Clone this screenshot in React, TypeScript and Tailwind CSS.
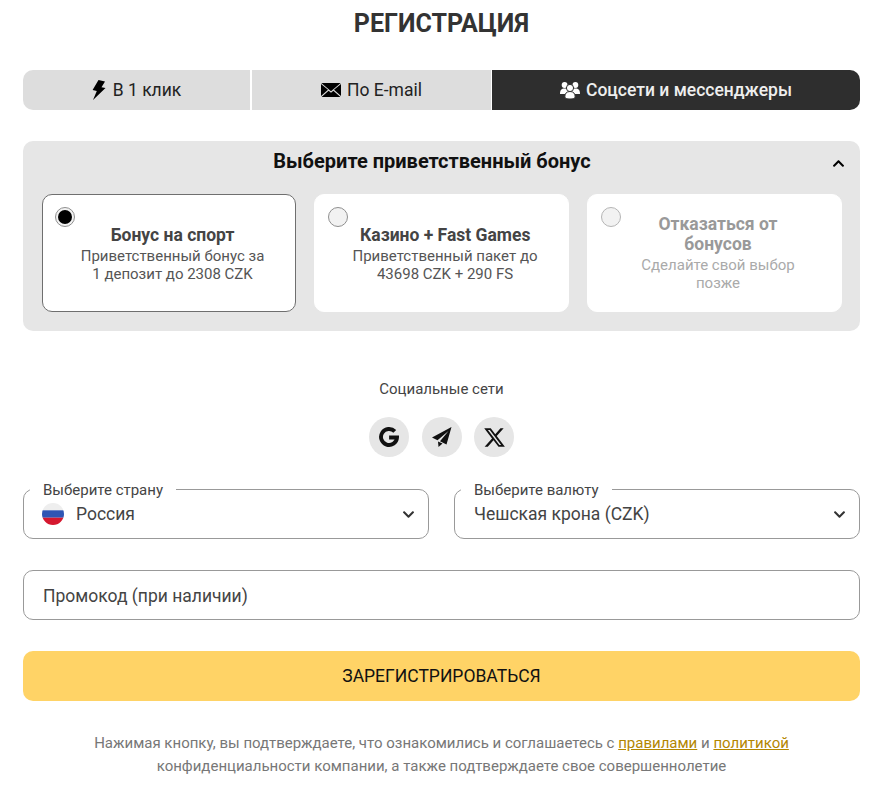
import React from "react";
import { FaChevronDown, FaChevronUp } from "react-icons/fa";
import { FaXTwitter } from "react-icons/fa6";

function Bolt() {
  return (
    <svg width="14" height="20" viewBox="0 0 14 20" fill="#000000">
      <path d="M6.5 0 L13 1.5 L9.5 7.2 L13.5 8 L1 20 L4.8 11 L0.6 10 Z" />
    </svg>
  );
}

function Envelope() {
  return (
    <svg width="20" height="14" viewBox="0 0 20 14" fill="#000000">
      <path d="M0.3 0 H19.7 L10 8.2 Z" />
      <path d="M0 1 V13 L7 6.8 Z" />
      <path d="M20 1 V13 L13 6.8 Z" />
      <path d="M0.6 14 H19.4 L12.4 7.8 L10 9.8 L7.6 7.8 Z" />
    </svg>
  );
}

function Users() {
  return (
    <svg width="20" height="17" viewBox="0 0 20 17" fill="#ffffff">
      <circle cx="4.6" cy="3" r="2.9" />
      <circle cx="15.4" cy="3" r="2.9" />
      <path d="M0 12 C0 8 1.5 6.5 4.5 6.5 C7.5 6.5 9 8 9 12 Z" />
      <path d="M11 12 C11 8 12.5 6.5 15.5 6.5 C18.5 6.5 20 8 20 12 Z" />
      <circle cx="10" cy="6" r="3.6" stroke="#2e2e2e" strokeWidth="1" />
      <path d="M4.8 15 C4.8 11.5 6.5 9.5 10 9.5 C13.5 9.5 15.2 11.5 15.2 15 C15.2 16.4 13 17 10 17 C7 17 4.8 16.4 4.8 15 Z" stroke="#2e2e2e" strokeWidth="1" />
    </svg>
  );
}

function GoogleG() {
  return (
    <svg width="20" height="20" viewBox="0 0 19 19" fill="none" stroke="#111111" strokeWidth="3.7">
      <path d="M15 4.2 A7.6 7.6 0 1 0 17.1 10 H9.6" />
    </svg>
  );
}

function Plane() {
  return (
    <svg width="20" height="22" viewBox="0 0 20 22" fill="#111111">
      <path d="M19.5 1 L0 11.5 L5.5 14.2 L16.5 5 L8 15.3 L14.5 18.5 Z" />
      <path d="M6 15.5 L6.5 21 L10.5 17.5 Z" />
    </svg>
  );
}

function Bonus({ title, lines, active, muted }: { title: string; lines: string[]; active?: boolean; muted?: boolean }) {
  return (
    <div className={"relative h-[118px] rounded-[10px] bg-white pl-[38px] pr-[31px] flex flex-col items-center pt-[19px] text-center border " + (active ? "border-[#6f6f6f]" : "border-white")}>
      <div className={"absolute top-[12px] w-[20px] h-[20px] rounded-full border bg-[#f2f2f2] flex items-center justify-center " + (active ? "left-[12px] border-[#8f8f8f]" : muted ? "left-[13px] border-[#b5b5b5]" : "left-[13px] border-[#8f8f8f]")}>
        {active && <div className="w-[14px] h-[14px] rounded-full bg-black" />}
      </div>
      <div className={"text-[17.5px] leading-[20px] font-bold max-w-[170px] " + (muted ? "text-[#999999]" : "text-[#444444] mt-[11px] whitespace-nowrap")}>{title}</div>
      <div className={"text-[15px] leading-[18px] whitespace-nowrap " + (muted ? "text-[#aaaaaa] mt-[2px]" : "text-[#555555] mt-[2px]")}>
        {lines.map((l) => <div key={l}>{l}</div>)}
      </div>
    </div>
  );
}

function Select({ label, children }: { label: string; children: React.ReactNode }) {
  return (
    <div className="relative flex-1 h-[50px] rounded-[10px] border border-[#999999] flex items-center pl-[19px] pr-[13px]">
      <span className="absolute left-[6px] top-[-9px] bg-white px-[13px] text-[15px] leading-[18px] text-[#444444]">{label}</span>
      <div className="flex-1 flex items-center gap-[12px] text-[17.5px] text-[#444444]">{children}</div>
      <FaChevronDown className="w-[13px] h-[13px] text-[#333333]" />
    </div>
  );
}

export default function App() {
  return (
    <div className="w-[877px] h-[807px] bg-white pl-[23px] pr-[17px] overflow-hidden" style={{ fontFamily: "Roboto, sans-serif" }}>
      <h1 className="pt-[9px] h-[70px] text-center text-[25px] leading-[30px] font-bold text-[#333333]">РЕГИСТРАЦИЯ</h1>

      <div className="flex h-[40px] text-[17.5px]">
        <div className="w-[227px] rounded-l-[10px] bg-[#dddddd] text-[#222222] flex items-center justify-center gap-[7px]">
          <Bolt />В 1 клик
        </div>
        <div className="w-[239px] ml-[2px] bg-[#dddddd] text-[#222222] flex items-center justify-center gap-[6px]">
          <Envelope />По E-mail
        </div>
        <div className="flex-1 ml-px rounded-r-[10px] bg-[#2e2e2e] text-[#eeeeee] font-medium flex items-center justify-center gap-[6px]">
          <Users />Соцсети и мессенджеры
        </div>
      </div>

      <div className="mt-[31px] h-[190px] rounded-[10px] bg-[#e6e6e6] pl-[19px] pr-[18px]">
        <div className="relative h-[53px] flex items-start justify-center pt-[8px] pr-[20px]">
          <span className="text-[20px] leading-[24px] font-bold text-[#111111]">Выберите приветственный бонус</span>
          <FaChevronUp className="absolute right-[-3px] top-[16px] w-[13px] h-[13px] text-black" />
        </div>
        <div className="grid grid-cols-[254px_255px_255px] gap-[18px]">
          <Bonus active title="Бонус на спорт" lines={["Приветственный бонус за", "1 депозит до 2308 CZK"]} />
          <Bonus title="Казино + Fast Games" lines={["Приветственный пакет до", "43698 CZK + 290 FS"]} />
          <Bonus muted title="Отказаться от бонусов" lines={["Сделайте свой выбор", "позже"]} />
        </div>
      </div>

      <div className="mt-[49px] text-center text-[15px] leading-[18px] text-[#444444]">Социальные сети</div>
      <div className="mt-[19px] flex justify-center gap-[12px]">
        <div className="w-[40px] h-[40px] rounded-full bg-[#e6e6e6] flex items-center justify-center"><GoogleG /></div>
        <div className="ml-px w-[40px] h-[40px] rounded-full bg-[#e6e6e6] flex items-center justify-center"><Plane /></div>
        <div className="w-[40px] h-[40px] rounded-full bg-[#e6e6e6] flex items-center justify-center"><FaXTwitter className="w-[23px] h-[23px] text-[#111111]" /></div>
      </div>

      <div className="mt-[32px] flex gap-[25px]">
        <Select label="Выберите страну">
          <svg width="22" height="22" viewBox="0 0 22 22" className="rounded-full -ml-px">
            <rect width="22" height="7.3" fill="#eeeeee" />
            <rect y="7.3" width="22" height="7.4" fill="#2f55b4" />
            <rect y="14.7" width="22" height="7.3" fill="#d5182f" />
          </svg>
          Россия
        </Select>
        <Select label="Выберите валюту">Чешская крона (CZK)</Select>
      </div>

      <div className="mt-[31px] h-[50px] rounded-[10px] border border-[#999999] flex items-center pl-[19px] pt-[2px] text-[17.5px] text-[#444444]">Промокод (при наличии)</div>

      <div className="mt-[31px] h-[50px] rounded-[10px] bg-[#ffd366] flex items-center justify-center text-[17.5px] text-[#111111]">ЗАРЕГИСТРИРОВАТЬСЯ</div>

      <div className="mt-[31px] text-center text-[15px] leading-[23px] text-[#777777]">
        <div>Нажимая кнопку, вы подтверждаете, что ознакомились и соглашаетесь с <a className="underline text-[#b38600]">правилами</a> и <a className="underline text-[#b38600]">политикой</a></div>
        <div>конфиденциальности компании, а также подтверждаете свое совершеннолетие</div>
      </div>
    </div>
  );
}
